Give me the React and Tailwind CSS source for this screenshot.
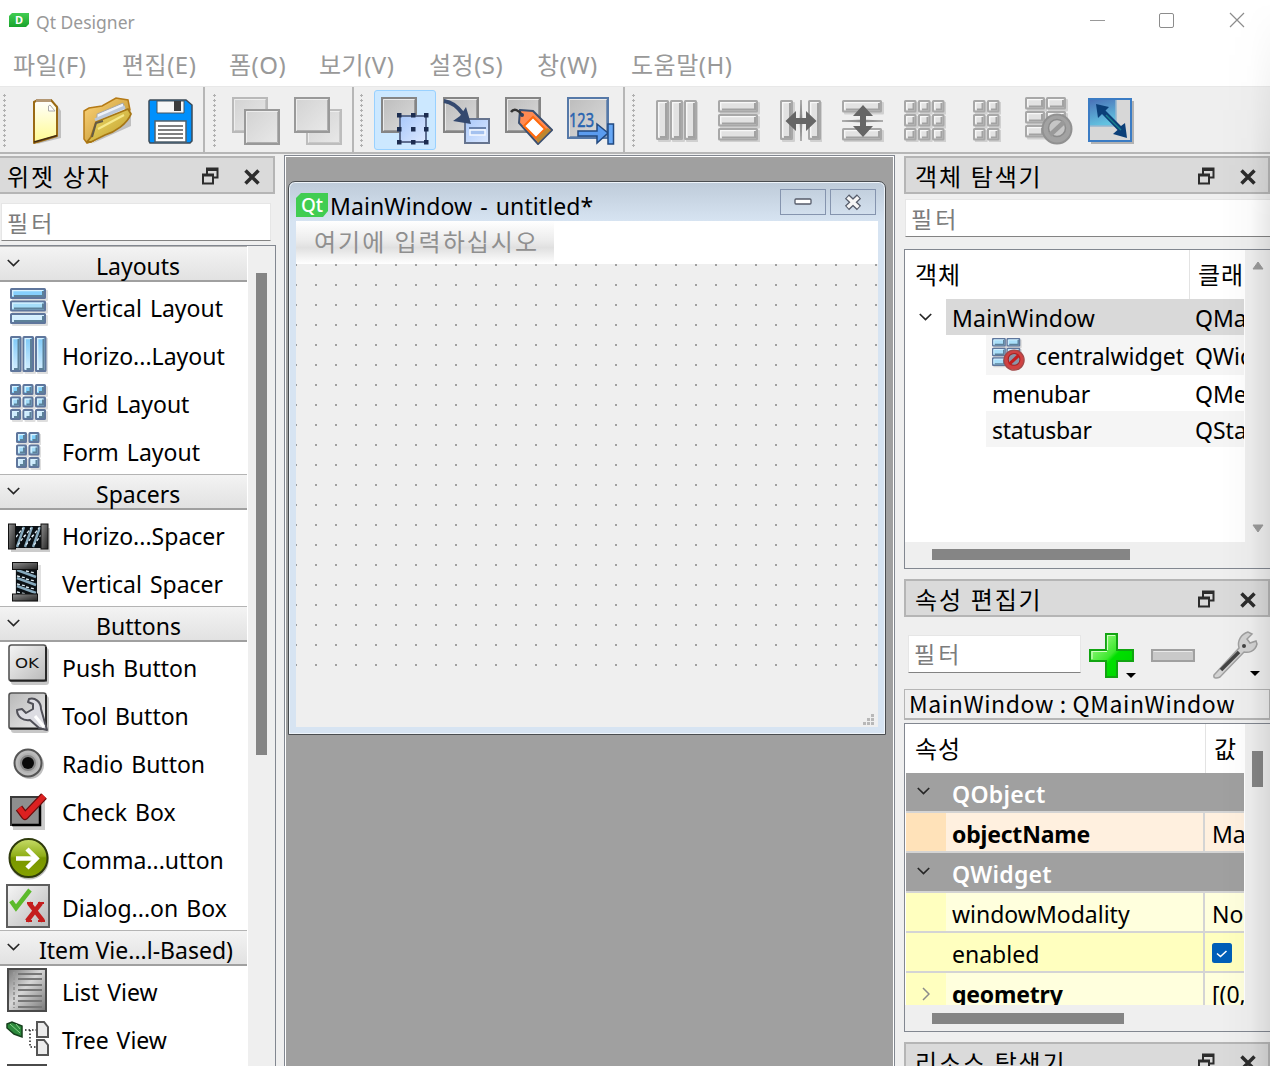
import React from "react";

const FONT = "font-['Noto_Sans','Noto_Sans_CJK_KR',sans-serif]";

/* ---------- shared icon definitions ---------- */

function Defs() {
  return (
    <svg className="absolute h-0 w-0" aria-hidden="true">
      <defs>
        <linearGradient id="gray" x1="0" y1="0" x2="1" y2="1">
          <stop offset="0" stopColor="#d2d2d2" />
          <stop offset="1" stopColor="#e9e9e9" />
        </linearGradient>
        <linearGradient id="mid" x1="0" y1="0" x2="1" y2="1">
          <stop offset="0" stopColor="#bcbcbc" />
          <stop offset="1" stopColor="#dcdcdc" />
        </linearGradient>
        <linearGradient id="blueV" x1="0" y1="0" x2="0" y2="1">
          <stop offset="0" stopColor="#7cc8f8" />
          <stop offset="1" stopColor="#d6efff" />
        </linearGradient>
        <linearGradient id="sky" x1="0" y1="0" x2="1" y2="1">
          <stop offset="0" stopColor="#a9c8fa" />
          <stop offset="1" stopColor="#dbe8ff" />
        </linearGradient>
        <linearGradient id="page" x1="0" y1="0" x2="0" y2="1">
          <stop offset="0" stopColor="#ffffff" />
          <stop offset="1" stopColor="#fffa90" />
        </linearGradient>
        <linearGradient id="folder" x1="0" y1="0" x2="1" y2="1">
          <stop offset="0" stopColor="#ffd57c" />
          <stop offset="1" stopColor="#b58a22" />
        </linearGradient>
        <linearGradient id="flap" x1="0" y1="0" x2="1" y2="1">
          <stop offset="0" stopColor="#f0e06e" />
          <stop offset="1" stopColor="#c09a28" />
        </linearGradient>
        <linearGradient id="green" x1="0" y1="0" x2="1" y2="1">
          <stop offset="0" stopColor="#b8ff9c" />
          <stop offset="0.48" stopColor="#3de82e" />
          <stop offset="0.55" stopColor="#00e000" />
          <stop offset="1" stopColor="#00d000" />
        </linearGradient>
        <linearGradient id="btn" x1="0" y1="0" x2="1" y2="1">
          <stop offset="0" stopColor="#f6f6f6" />
          <stop offset="1" stopColor="#b9b9b9" />
        </linearGradient>
        <linearGradient id="toolbtn" x1="0" y1="0" x2="1" y2="1">
          <stop offset="0" stopColor="#b8b8b8" />
          <stop offset="1" stopColor="#ececec" />
        </linearGradient>
        <linearGradient id="metal" x1="0" y1="0" x2="1" y2="1">
          <stop offset="0" stopColor="#8e8e8e" />
          <stop offset="1" stopColor="#242424" />
        </linearGradient>
        <linearGradient id="list" x1="0" y1="0" x2="1" y2="1">
          <stop offset="0" stopColor="#777777" />
          <stop offset="0.45" stopColor="#d6d6d6" />
          <stop offset="1" stopColor="#777777" />
        </linearGradient>
        <linearGradient id="olive" x1="0" y1="0" x2="0" y2="1">
          <stop offset="0" stopColor="#c7dc68" />
          <stop offset="0.45" stopColor="#8fae18" />
          <stop offset="0.5" stopColor="#789600" />
          <stop offset="1" stopColor="#86a200" />
        </linearGradient>
        <linearGradient id="bluePanel" x1="0" y1="0" x2="0.3" y2="1">
          <stop offset="0" stopColor="#4a72b8" />
          <stop offset="1" stopColor="#62c2e0" />
        </linearGradient>
      </defs>
    </svg>
  );
}

function Svg({ w, h, children, className = "" }) {
  return (
    <svg width={w} height={h} viewBox={`0 0 ${w} ${h}`} className={"shrink-0 " + className} fill="none">
      {children}
    </svg>
  );
}

/* A bevelled cell used by all layout icons. */
function Cell({ x, y, w, h, blue, fill }) {
  const edge = blue ? "#5f769c" : "#a8a8a8";
  const inner = fill || (blue ? "url(#blueV)" : "#e2e2e2");
  return (
    <g>
      <rect x={x + 2} y={y + 2} width={w} height={h} rx="1" fill="#000" opacity="0.13" />
      <rect x={x + 1} y={y + 1} width={w - 2} height={h - 2} rx="0.5" fill={inner} stroke={edge} strokeWidth="2" />
      <path d={`M${x + 2.700} ${y + h - 3}V${y + 2.700}H${x + w - 3}`} stroke={blue ? "#d8f2ff" : "#f8f8f8"} strokeWidth="1.300" />
      <path d={`M${x + w - 3} ${y + 3}V${y + h - 3}H${x + 4}`} stroke={blue ? "#5d8199" : "#a2a2a2"} strokeWidth="2" />
    </g>
  );
}

function Rows({ size = 42, blue }) {
  const g = size === 42 ? 14 : 12.5;
  const f = blue ? ["#86d0fd", "#a6def9", "#d3eeff"] : [];
  return (
    <Svg w={size} h={size}>
      {[0, 1, 2].map((i) => <Cell key={i} x={0} y={i * g} w={size - 2} h={g - 1.500} blue={blue} fill={f[i]} />)}
    </Svg>
  );
}

function Cols({ size = 42, blue }) {
  const g = size === 42 ? 14 : 12.5;
  return (
    <Svg w={size} h={size}>
      {[0, 1, 2].map((i) => <Cell key={i} x={i * g} y={0} w={g - 1} h={size - 2} blue={blue} />)}
    </Svg>
  );
}

function GridIcon({ cols, size = 42, blue }) {
  const g = size === 42 ? 14 : 12.5;
  const list = [];
  for (let r = 0; r < 3; r++) for (let c = 0; c < cols; c++) list.push([r, c]);
  const f = ["#7fd0fb", "#a3dbf8", "#cdeafc"];
  return (
    <Svg w={cols * g} h={size}>
      {list.map(([r, c]) => (
        <Cell key={r + "-" + c} x={c * g} y={r * g} w={g - 1.500} h={g - 1.500} blue={blue} fill={blue ? f[r] : undefined} />
      ))}
    </Svg>
  );
}

function SplitH() {
  return (
    <Svg w={42} h={42}>
      <Cell x={0} y={0} w={13} h={40} />
      <Cell x={28} y={0} w={13} h={40} />
      <path d="M21 0L22 20L21 41L20 20Z" stroke="#8a8a8a" strokeWidth="0.800" fill="#777" />
      <path d="M5.500 21L16 11V18H26V11L36.500 21L26 31V24H16V31Z" fill="#666" />
    </Svg>
  );
}

function SplitV() {
  return (
    <Svg w={42} h={42}>
      <Cell x={0} y={0} w={40} h={12.500} />
      <Cell x={0} y={28} w={40} h={12.500} />
      <path d="M0 21L20 20L41 21L20 22Z" stroke="#8a8a8a" strokeWidth="0.800" fill="#777" />
      <path d="M21 5L31 16H24V26H31L21 37L11 26H18V16H11Z" fill="#666" />
    </Svg>
  );
}

function BreakIcon({ blue, scale = 1 }) {
  const cells = [[0, 0], [21, 0], [0, 14], [21, 14], [0, 28]];
  return (
    <svg width={48 * scale} height={48 * scale} viewBox="0 0 48 48" fill="none" className="shrink-0">
      {cells.map(([x, y]) => (
        <Cell key={x + "," + y} x={x} y={y} w={20} h={12.500} blue={blue} fill={blue ? "#a9dffa" : undefined} />
      ))}
      <circle cx="32" cy="32" r="14.500" fill={blue ? "#d04242" : "#a2a2a2"} stroke={blue ? "#a34848" : "#919191"} strokeWidth="2" />
      <circle cx="32" cy="31" r="8.500" fill={blue ? "#8a96aa" : "#c6c6c6"} stroke={blue ? "#a52222" : "#8b8b8b"} strokeWidth="1.500" />
      <path d="M25 38L39 25" stroke={blue ? "#c41d1d" : "#999"} strokeWidth="4.500" />
    </svg>
  );
}

function Sq({ x, y, s, fill = "url(#mid)", stroke = "#858585" }) {
  return (
    <g>
      <rect x={x + 1} y={y + 1} width={s - 2} height={s - 2} fill={fill} stroke={stroke} strokeWidth="2" />
      <path d={`M${x + 2.500} ${y + s - 3}V${y + 2.500}H${x + s - 3}`} stroke="#f2f2f2" opacity="0.8" />
      <path d={`M${x + s - 2.500} ${y + 3}V${y + s - 2.500}H${x + 3}`} stroke={stroke} opacity="0.7" />
    </g>
  );
}

const NewIcon = () => (
  <Svg w={30} h={48}>
    <path d="M6 47L30 41V14L26 8Z" fill="#000" opacity="0.2" />
    <path d="M3 5L7 3H20L26 10V39L3 46Z" fill="url(#page)" stroke="#9a6a14" strokeWidth="2" strokeLinejoin="round" />
    <path d="M5 3.500H20" stroke="#b39773" strokeWidth="3" />
    <path d="M17.500 9V14H24L19 8Z" fill="#fff" stroke="#aaa" />
    <path d="M3 45L26 38.500" stroke="#432b10" strokeWidth="1.500" />
  </Svg>
);

const OpenIcon = () => (
  <Svg w={50} h={50}>
    <path d="M8 48L48 30V20L30 34Z" fill="#000" opacity="0.2" />
    <path d="M1 15L6 12L19 10L33 2L45 4L47 14L10 45L4 47L1 43Z" fill="url(#folder)" stroke="#b57a16" strokeWidth="1.500" />
    <path d="M14 18L40 7L43 16L14 37Z" fill="#eef2f8" stroke="#a7a7a7" />
    <path d="M12 24L42 11" stroke="#bcc8d8" strokeWidth="3" />
    <path d="M8 46L4 46L8 41L13 26L45 13L48 18C44 28 32 36 22 39Z" fill="url(#flap)" stroke="#a67615" strokeWidth="1.800" strokeLinejoin="round" />
    <path d="M9 41L13 27L20 25" stroke="#655b45" strokeWidth="2" />
    <path d="M15 33L41 19" stroke="#f6e98c" strokeWidth="2" />
  </Svg>
);

const SaveIcon = () => (
  <Svg w={45} h={45} className="mt-[2px]">
    <path d="M2 1H38L44 6V42L42 44H2L1 42V2Z" fill="#0090fc" stroke="#3c4b58" strokeWidth="1.500" />
    <path d="M9 2H36V14H9Z" fill="#f7f7f7" stroke="#46555f" />
    <path d="M26 2H33V12H26Z" fill="#3c3c3c" />
    <path d="M7 22H38V43H7Z" fill="#fff" stroke="#52606b" strokeWidth="1.500" />
    <path d="M10 27H35M10 31H35M10 35H35M10 39H35" stroke="#555" strokeWidth="1.700" />
  </Svg>
);

const BackIcon = () => (
  <Svg w={48} h={48}>
    <Sq x={0} y={0} s={36} stroke="#b9b9b9" fill="url(#gray)" />
    <Sq x={12} y={12} s={36} stroke="#999" fill="url(#gray)" />
  </Svg>
);
const FrontIcon = () => (
  <Svg w={48} h={48}>
    <Sq x={12} y={12} s={36} stroke="#bdbdbd" fill="url(#gray)" />
    <Sq x={0} y={0} s={36} stroke="#999" fill="url(#gray)" />
  </Svg>
);

const WidgetEdit = () => (
  <Svg w={48} h={50} className="mt-px">
    <Sq x={0} y={1} s={36} />
    <rect x="19" y="20" width="26" height="26" fill="url(#sky)" stroke="#5d6e90" strokeWidth="2" />
    {[16, 30, 43].map((x) => [17, 31, 44].map((y) => <rect key={x + "-" + y} x={x} y={y} width="4.500" height="4.500" fill="#1c2d50" />))}
  </Svg>
);

const SignalEdit = () => (
  <Svg w={48} h={48}>
    <Sq x={0} y={0} s={36} />
    <rect x="22" y="22" width="24" height="24" fill="url(#sky)" stroke="#66748f" strokeWidth="2" />
    <path d="M27 33H42V38H27Z" fill="#a4c1ef" stroke="#f5f9ff" strokeWidth="1.500" />
    <path d="M26 31H43" stroke="#6a83ad" strokeWidth="2" />
    <path d="M1 4C9 5 15 10 20 17" stroke="#34496f" strokeWidth="4" />
    <path d="M23 10L28 27L10 24L17 19Z" fill="#34496f" />
  </Svg>
);

const BuddyEdit = () => (
  <Svg w={48} h={48}>
    <Sq x={0} y={0} s={36} />
    <path d="M15 13L28 14L47 33L33 47L14 26Z" fill="#ff8a52" stroke="#3c5070" strokeWidth="2" />
    <path d="M28 20L40 32L31 41L19 29Z" fill="#fff" stroke="#ff6a0c" strokeWidth="2" />
    <path d="M33 46L46 33L42 31L31 42Z" fill="#bd872f" />
    <path d="M6 15C9 11 14 13 17 18" stroke="#333" strokeWidth="2.500" />
    <circle cx="17" cy="18" r="2" fill="#30405c" />
  </Svg>
);

const TabEdit = () => (
  <Svg w={48} h={48}>
    <Sq x={0} y={0} s={42} stroke="#5679a8" />
    <text x="2" y="30" fontSize="20" textLength="25" lengthAdjust="spacingAndGlyphs" fontFamily="Noto Sans" fill="#2763b0" stroke="#2763b0" strokeWidth="0.500">123</text>
    <path d="M11 34H30V27L41 36L30 46V39H11Z" fill="#5b9cef" stroke="#234a80" strokeWidth="1.500" />
    <rect x="41" y="27" width="5.500" height="20" fill="#67a8f6" stroke="#234a80" strokeWidth="1.500" />
  </Svg>
);

const AdjustIcon = () => (
  <Svg w={46} h={46}>
    <rect x="3" y="3" width="43" height="43" fill="#000" opacity="0.25" />
    <rect x="1" y="1" width="42" height="42" fill="#d7d7d7" stroke="#3b7cc4" strokeWidth="2" />
    <rect x="2" y="2" width="26" height="26" fill="url(#bluePanel)" />
    <path d="M28 2V28H2" stroke="#94b7cf" strokeWidth="1.500" />
    <path d="M8 6L21 9L17.500 12.500L33 28L37 25L39 40L25 36L29.500 32L14 16L10 20Z" fill="#0b3f78" />
    <path d="M18 17L33 32" stroke="#17808c" strokeWidth="1.500" />
  </Svg>
);

/* ---------- widget box icons ---------- */

const SpacerH = () => (
  <Svg w={44} h={32} className="ml-[4px] mt-[9px]">
    <rect x="3" y="5" width="39" height="24" fill="#000" opacity="0.2" />
    <rect x="8" y="3" width="25" height="22" fill="#0b1014" />
    {[0, 8, 16].map((i) => (
      <g key={i}>
        <path d={`M${9 + i} 24L${16 + i} 4`} stroke="#86a9bd" strokeWidth="2.400" />
        <path d={`M${8 + i} 14L${15 + i} 5M${10 + i} 22L${17 + i} 12`} stroke="#dceaf2" strokeWidth="1.300" strokeDasharray="3 2" />
      </g>
    ))}
    <rect x="0.500" y="1" width="7" height="25" fill="url(#metal)" stroke="#111" />
    <rect x="33" y="1" width="7" height="25" fill="url(#metal)" stroke="#111" />
  </Svg>
);

const SpacerV = () => (
  <Svg w={32} h={42} className="mt-[2px]">
    <rect x="3" y="3" width="26" height="37" fill="#000" opacity="0.12" />
    <rect x="4" y="7" width="21" height="26" fill="#0b1014" />
    {[0, 8, 16].map((i) => (
      <g key={i}>
        <path d={`M5 ${8 + i}L24 ${15 + i}`} stroke="#86a9bd" strokeWidth="2.400" />
        <path d={`M5 ${14 + i}L14 ${16 + i}M14 ${9 + i}L23 ${11 + i}`} stroke="#dceaf2" strokeWidth="1.300" strokeDasharray="3 2" />
      </g>
    ))}
    <rect x="0.500" y="0.500" width="25" height="7" fill="url(#metal)" stroke="#111" />
    <rect x="0.500" y="32" width="25" height="7" fill="url(#metal)" stroke="#111" />
  </Svg>
);

const Plate = ({ fill = "url(#btn)" }) => (
  <g>
    <rect x="3" y="4" width="38" height="37" rx="3" fill="#000" opacity="0.22" />
    <rect x="1" y="1" width="37" height="36" rx="2.500" fill={fill} stroke="#555" strokeWidth="1.600" />
    <path d="M2 36.500H38V3" stroke="#222" strokeWidth="1.800" />
  </g>
);

const PushIcon = () => (
  <Svg w={42} h={42} className="-mt-[2px] ml-[2px]">
    <Plate />
    <text x="7" y="23.500" fontSize="14" textLength="24" lengthAdjust="spacingAndGlyphs" fontFamily="DejaVu Sans" fill="#111">OK</text>
  </Svg>
);

const ToolIcon = () => (
  <Svg w={42} h={42} className="-mt-[2px] ml-[2px]">
    <Plate fill="url(#toolbtn)" />
    <path d="M21 7C27 5 33 10 33 17L39 38L31 36L22 28C15 29 9 25 9 18L14 17L18 21L25 17V12L20 10Z" fill="#dcdce2" stroke="#505058" strokeWidth="2" strokeLinejoin="round" />
    <path d="M27 24L36 35" stroke="#fff" strokeWidth="3" />
  </Svg>
);

const RadioIcon = () => (
  <Svg w={32} h={34} className="ml-[2px] mt-[5px]">
    <circle cx="17" cy="17" r="14" fill="#000" opacity="0.25" />
    <circle cx="15" cy="15" r="13.500" fill="#bcbcbc" stroke="#555" strokeWidth="2" />
    <circle cx="15" cy="15" r="9" fill="#858585" stroke="#b0b0b0" strokeWidth="2" />
    <circle cx="15" cy="15" r="6" fill="#0a0a0a" />
  </Svg>
);

const CheckIcon = () => (
  <Svg w={40} h={40} className="ml-[3px] mt-[3px]">
    <rect x="3" y="8" width="32" height="30" fill="#000" opacity="0.2" />
    <rect x="1" y="5" width="29" height="28" fill="#8e8e8e" stroke="#3a3a3a" strokeWidth="2" />
    <path d="M30 7V33H2" stroke="#000" strokeWidth="2.500" />
    <path d="M9 16L15 24L34 4" stroke="#6b0d0d" strokeWidth="8" strokeLinejoin="round" />
    <path d="M9 16L15 24L34 4" stroke="#dc2020" strokeWidth="5.500" strokeLinejoin="round" />
  </Svg>
);

const CommandIcon = () => (
  <Svg w={42} h={42} className="ml-px mt-px">
    <circle cx="21" cy="21.500" r="20" fill="#000" opacity="0.25" />
    <circle cx="20.500" cy="20" r="19" fill="url(#olive)" stroke="#2f3b0c" strokeWidth="2" />
    <path d="M8 20.500H28" stroke="#fff" strokeWidth="4.500" />
    <path d="M19 11L28.500 20.500L19 30" stroke="#fff" strokeWidth="4.500" />
  </Svg>
);

const DialogIcon = () => (
  <Svg w={44} h={44}>
    <rect x="1" y="1" width="42" height="42" fill="url(#btn)" stroke="#5e5e5e" strokeWidth="2" />
    <path d="M5 17L10 24L24 6" stroke="#5cba2c" strokeWidth="4.500" />
    <path d="M23 19L37 37M35 19L21 37" stroke="#c41e1e" strokeWidth="4.500" />
    <path d="M20 37H26M32 37H39M21 19H27M32 19H38" stroke="#c41e1e" strokeWidth="2" />
  </Svg>
);

const ListIcon = () => (
  <Svg w={42} h={44} className="-ml-px">
    <rect x="1" y="1" width="38" height="42" fill="url(#list)" stroke="#4a4a4a" strokeWidth="2" />
    <path d="M11 6H35M11 11H35M11 17H35M11 22H35M11 28H35M11 33H35M11 39H35" stroke="#777" strokeWidth="2" />
    <path d="M7 4V40" stroke="#999" strokeWidth="2" strokeDasharray="3 2" />
  </Svg>
);

const TreeIcon = () => (
  <Svg w={46} h={38} className="ml-[2px] mt-[3px]">
    <path d="M1 3L6 1L16 5V16L8 13L1 7Z" fill="#2c8a3c" stroke="#16401d" strokeWidth="1.500" />
    <path d="M4 3L14 12M10 3L14 8" stroke="#8ad48c" />
    <path d="M19 9H30M24 9V26H30" stroke="#222" strokeWidth="1.500" strokeDasharray="1.500 2" />
    {[1, 19].map((y) => (
      <path key={y} d={`M31 ${y}H38L42 ${y + 5}V${y + 15}H31Z`} fill="#ececec" stroke="#555" strokeWidth="2" />
    ))}
  </Svg>
);

/* ---------- small controls ---------- */

function Chevron({ className = "", color = "#262626" }) {
  return (
    <svg width="13" height="8" viewBox="0 0 13 8" className={"shrink-0 " + className} fill="none">
      <path d="M0.800 1L6.500 6.500L12.200 1" stroke={color} strokeWidth="1.700" />
    </svg>
  );
}

function DockTitle({ children, className = "" }) {
  return (
    <div className={"flex h-[38px] shrink-0 items-center border-2 border-[#b5b5b5] bg-[#dadada] " + className}>
      <span className="grow whitespace-pre pt-[4px] text-[24px] leading-[30px] tracking-[1.800px] text-black">{children}</span>
      <Svg w={17} h={18} className="mr-[25px] mt-[2px]">
        <path d="M5 7V1.500H15.500V10.500H12" stroke="#2c2c2c" strokeWidth="2" />
        <path d="M5 2.500H16" stroke="#2c2c2c" strokeWidth="3" />
        <rect x="1" y="8" width="10" height="8.500" stroke="#2c2c2c" strokeWidth="2" />
        <path d="M0 8H12" stroke="#2c2c2c" strokeWidth="3" />
      </Svg>
      <Svg w={16} h={16} className="mt-[4px]">
        <path d="M1.500 1.500L14.500 14.500M14.500 1.500L1.500 14.500" stroke="#2c2c2c" strokeWidth="3.500" />
      </Svg>
    </div>
  );
}

function Filter({ className = "" }) {
  return (
    <div className={"flex h-[38px] shrink-0 items-center border border-[#e6e6e6] border-b-[#838383] bg-white pl-[5px] pt-[2px] text-[23px] tracking-[3px] text-[#7c7c7c] " + className}>
      필터
    </div>
  );
}

function Grip() {
  return <div className="h-[54px] w-[6px] shrink-0 bg-[radial-gradient(circle,#b0b0b0_1px,transparent_1.400px)] bg-[size:5px_5px]" />;
}

function ToolGroup({ children, className = "" }) {
  return (
    <div className={"flex items-center border-[#b6b6b6] " + className}>
      <Grip />
      {children}
    </div>
  );
}

function Tool({ children, active }) {
  return (
    <div className={"flex h-[60px] w-[62px] shrink-0 items-center justify-center pt-[2px] " + (active ? "rounded-[3px] border border-[#99d1ff] bg-[#cce8ff]" : "")}>
      {children}
    </div>
  );
}

/* ---------- widget box ---------- */

const SECTIONS = [
  {
    title: "Layouts", pad: "pl-[96px]",
    items: [
      ["Vertical Layout", <span className="ml-px pl-px pt-[2px]"><Rows size={38} blue /></span>],
      ["Horizo...Layout", <span className="ml-px pl-px pt-[2px]"><Cols size={38} blue /></span>],
      ["Grid Layout", <span className="ml-px pl-px pt-[2px]"><GridIcon cols={3} size={38} blue /></span>],
      ["Form Layout", <span className="pt-[2px]"><GridIcon cols={2} size={38} blue /></span>],
    ],
  },
  {
    title: "Spacers", pad: "pl-[96px]",
    items: [["Horizo...Spacer", <SpacerH />], ["Vertical Spacer", <SpacerV />]],
  },
  {
    title: "Buttons", pad: "pl-[96px]",
    items: [
      ["Push Button", <PushIcon />],
      ["Tool Button", <ToolIcon />],
      ["Radio Button", <RadioIcon />],
      ["Check Box", <CheckIcon />],
      ["Comma...utton", <CommandIcon />],
      ["Dialog...on Box", <DialogIcon />],
    ],
  },
  {
    title: "Item Vie...l-Based)", pad: "pl-[39px]",
    items: [
      ["List View", <ListIcon />],
      ["Tree View", <TreeIcon />],
      ["", <ListIcon />],
    ],
  },
];

function WidgetBox() {
  return (
    <aside className="flex w-[276px] shrink-0 flex-col pt-[2px]">
      <DockTitle className="mr-px border-l-0 pl-[7px] pr-[13px]">위젯 상자</DockTitle>
      <Filter className="ml-px mr-[5px] mt-[9px]" />
      <div className="mt-[4px] flex min-h-0 grow border-r border-t border-[#828790] bg-white">
        <div className="flex w-[248px] shrink-0 flex-col overflow-hidden">
          {SECTIONS.map((s) => (
            <div key={s.title} className="shrink-0">
              <div className={"relative flex h-[36px] w-[247px] items-center border-b-2 border-t border-b-[#a0a0a0] border-t-[#b4b4b4] bg-gradient-to-b from-[#f3f3f3] to-[#e2e2e2] " + s.pad}>
                <Chevron className="absolute left-[7px] top-[12px]" />
                <span className="whitespace-nowrap pt-[5px] text-[23px] leading-[30px]">{s.title}</span>
              </div>
              {s.items.map(([name, icon], i) => (
                <div key={i} className="flex h-[48px] items-center">
                  <div className="flex w-[56px] shrink-0 items-center justify-center">{icon}</div>
                  <span className="whitespace-nowrap pl-[6px] pt-[4px] text-[23px] leading-[30px] [word-spacing:2px]">{name}</span>
                </div>
              ))}
            </div>
          ))}
        </div>
        <div className="flex w-[27px] justify-center bg-[#efefef]">
          <div className="mt-[27px] h-[482px] w-[11px] bg-[#858585]" />
        </div>
      </div>
    </aside>
  );
}

/* ---------- form editor ---------- */

function FormWindow() {
  return (
    <div className="ml-[2px] mt-[24px] flex h-[554px] w-[598px] flex-col rounded-t-[7px] border border-[#4a4d50] bg-[#d7e4f2] bg-[linear-gradient(#becbd9,#d7e4f2_40px)] bg-no-repeat px-[7px] pb-[7px] shadow-[inset_0_0_0_1px_#eef4fa]">
      <div className="flex h-[39px] shrink-0 items-center">
        <div className="mt-[7px] flex h-[24px] w-[32px] items-center justify-center bg-[#41cd52] [clip-path:polygon(5px_0,100%_0,100%_18px,27px_100%,0_100%,0_5px)]">
          <span className="text-[19px] font-medium leading-[22px] text-white">Qt</span>
        </div>
        <span className="grow whitespace-nowrap pl-[2px] pt-[9px] text-[23px] leading-[28px] tracking-[0.100px] [word-spacing:2px]">MainWindow - untitled*</span>
        <div className="mr-[4px] mt-px flex h-[26px] w-[46px] items-center justify-center border border-[#8594ae]">
          <Svg w={18} h={8}><rect x="1" y="1" width="16" height="5" rx="1" fill="#fff" stroke="#555b69" strokeWidth="1.300" /></Svg>
        </div>
        <div className="mr-[2px] mt-px flex h-[26px] w-[46px] items-center justify-center border border-[#8594ae]">
          <Svg w={19} h={17}>
            <path d="M3 2.500L15 14M15 2.500L3 14" stroke="#555b69" strokeWidth="6" />
            <path d="M3.700 3.200L14.300 13.300M14.300 3.200L3.700 13.300" stroke="#f6f6f6" strokeWidth="3.500" />
          </Svg>
        </div>
      </div>
      <div className="flex min-h-0 grow flex-col bg-[#efefef]">
        <div className="h-[43px] shrink-0 bg-white">
          <div className="flex h-[43px] w-[258px] items-center bg-[linear-gradient(#fff,#ececec_45%,#e0e0e0_62%,#fff)] pb-[2px] pl-[18px]">
            <span className="whitespace-nowrap text-[24px] tracking-[2px] text-[#8f8f8f]">여기에 입력하십시오</span>
          </div>
        </div>
        <svg width="582" height="404" className="block shrink-0">
          <defs>
            <pattern id="dots" x="-1" y="0" width="20" height="20" patternUnits="userSpaceOnUse">
              <rect width="2" height="2" fill="#a0a0a0" />
            </pattern>
          </defs>
          <rect width="582" height="404" fill="url(#dots)" />
        </svg>
        <div className="flex grow items-end justify-end pb-[2px] pr-[4px]">
          <Svg w={11} h={11}>
            {[[8, 0], [4, 4], [8, 4], [0, 8], [4, 8], [8, 8]].map(([x, y]) => (
              <rect key={x + "," + y} x={x} y={y} width="3" height="3" fill="#b8b8b8" />
            ))}
          </Svg>
        </div>
      </div>
    </div>
  );
}

/* ---------- object inspector ---------- */

function ObjRow({ name, cls, indent, h, bg, icon, open, track = "" }) {
  return (
    <div className={"flex shrink-0 items-center " + h}>
      <div className={"flex shrink-0 items-center self-stretch pl-[13px] " + indent}>{open && <Chevron />}</div>
      <div className={"flex grow items-center self-stretch overflow-hidden pl-[6px] " + bg}>
        {icon}
        <span className={"grow whitespace-nowrap pt-px text-[23px] leading-[30px] " + track}>{name}</span>
        <span className="w-[49px] shrink-0 overflow-hidden whitespace-nowrap pt-px text-[23px] leading-[30px]">{cls}</span>
      </div>
    </div>
  );
}

function ObjectInspector() {
  return (
    <section className="flex shrink-0 flex-col">
      <DockTitle className="pl-[9px] pr-[12px]">객체 탐색기</DockTitle>
      <Filter className="ml-px mt-[5px] w-[380px]" />
      <div className="mt-[12px] flex h-[320px] flex-col border-y border-l border-[#828790] bg-white">
        <div className="flex min-h-0 grow">
          <div className="flex w-[340px] shrink-0 flex-col pl-px pr-px">
            <div className="flex h-[49px] shrink-0 text-[24px] leading-[49px] tracking-[1px]">
              <div className="w-[284px] shrink-0 border-r border-[#e3e3e3] pl-[9px]">객체</div>
              <div className="w-[54px] overflow-hidden whitespace-nowrap pl-[8px]">클래스</div>
            </div>
            <ObjRow name="MainWindow" cls="QMainWindow" indent="w-[40px]" h="h-[36px]" bg="bg-[#d9d9d9]" open track="tracking-[0.200px]" />
            <ObjRow name="centralwidget" cls="QWidget" indent="w-[80px]" h="h-[40px]" bg="bg-[#f5f5f5]" icon={<span className="mr-[11px]"><BreakIcon blue scale={0.690} /></span>} />
            <ObjRow name="menubar" cls="QMenuBar" indent="w-[80px]" h="h-[36px]" bg="" track="tracking-[-0.200px]" />
            <ObjRow name="statusbar" cls="QStatusBar" indent="w-[80px]" h="h-[36px]" bg="bg-[#f5f5f5]" track="tracking-[-0.300px]" />
          </div>
          <div className="flex w-[25px] flex-col items-center justify-between bg-[#efefef] pb-[9px] pt-[11px]">
            <Svg w={12} h={9}><path d="M6 1L11 8H1Z" fill="#9b9b9b" stroke="#9b9b9b" strokeLinejoin="round" /></Svg>
            <Svg w={12} h={9}><path d="M6 8L11 1H1Z" fill="#9b9b9b" stroke="#9b9b9b" strokeLinejoin="round" /></Svg>
          </div>
        </div>
        <div className="flex h-[26px] shrink-0 items-center bg-[#efefef] pb-[2px] pl-[27px]">
          <div className="h-[11px] w-[198px] bg-[#858585]" />
        </div>
      </div>
    </section>
  );
}

/* ---------- property editor ---------- */

function GroupRow({ name }) {
  return (
    <div className="flex h-[40px] shrink-0 items-center border-b-2 border-[#d4d4d4] bg-[#a0a0a0] pl-[11px]">
      <Chevron className="mb-[2px]" />
      <span className="pl-[22px] pt-[4px] text-[23px] font-semibold leading-[30px] tracking-[0.300px] text-white">{name}</span>
    </div>
  );
}

function PropRow({ name, value, bold, gutter, bg, arrow }) {
  return (
    <div className="flex h-[40px] shrink-0">
      <div className={"flex w-[40px] shrink-0 items-center justify-center border-b-2 border-[#d4d4d4] " + gutter}>
        {arrow && <Svg w={8} h={14} className="mt-[3px]"><path d="M1 1L7 7L1 13" stroke="#8b8b8b" strokeWidth="1.500" /></Svg>}
      </div>
      <div className={"flex w-[259px] shrink-0 items-center border-b-2 border-r-2 border-[#d4d4d4] pl-[6px] pt-[4px] text-[23px] leading-[30px] " + bg + (bold ? " font-bold tracking-[-0.200px]" : "")}>{name}</div>
      <div className={"flex w-[39px] shrink-0 items-center overflow-hidden whitespace-nowrap border-b-2 border-[#d4d4d4] pl-[7px] pt-[4px] text-[23px] leading-[30px] " + bg}>{value}</div>
    </div>
  );
}

function PropertyEditor() {
  return (
    <section className="mt-[10px] flex shrink-0 flex-col">
      <DockTitle className="pl-[9px] pr-[12px]">속성 편집기</DockTitle>
      <div className="flex h-[72px] shrink-0 items-center pl-[4px]">
        <Filter className="mt-px w-[173px]" />
        <div className="ml-[8px] mt-[5px] flex w-[62px] shrink-0 items-end">
          <Svg w={48} h={46}>
            <path d="M17 1H28V17H44V28H28V44H17V28H1V17H17Z" fill="url(#green)" stroke="#11a411" strokeWidth="2" />
            <path d="M18.500 17V2.500H26M3 26V18.500H18" stroke="#d0ffc0" strokeWidth="1.200" />
            <path d="M37 40H47L42 45Z" fill="#000" />
          </Svg>
        </div>
        <div className="mt-[4px] w-[61px] shrink-0">
          <Svg w={44} h={13}>
            <rect x="1" y="1" width="42" height="11" fill="#c9c9c9" stroke="#a0a0a0" strokeWidth="2" />
            <path d="M2.500 2.500H41" stroke="#e9e9e9" />
          </Svg>
        </div>
        <Svg w={50} h={50} className="mt-[5px]">
          <path d="M2 44L27 17C25 10 29 3 36 1L40 3L35 8L38 12L44 10L45 13C43 21 36 22 32 21L8 46C4 48 1 47 2 44Z" fill="#d3d3d3" stroke="#a0a0a0" strokeWidth="1.500" />
          <path d="M9 39L27 21" stroke="#444" strokeWidth="3.500" />
          <circle cx="32" cy="15" r="2" fill="#444" />
          <path d="M38 40H48L43 45Z" fill="#000" />
        </Svg>
      </div>
      <div className="flex h-[31px] shrink-0 items-center border border-b-2 border-[#b5b5b5] pl-[4px] font-['Noto_Sans_CJK_KR',sans-serif] text-[23px]">
        <span className="whitespace-pre pb-px tracking-[0.600px]">MainWindow : QMainWindow</span>
      </div>
      <div className="mt-[3px] flex h-[309px] flex-col border-y border-l border-[#828790] bg-white">
        <div className="flex min-h-0 grow">
          <div className="flex w-[340px] shrink-0 flex-col overflow-hidden pl-px pr-px">
            <div className="flex h-[49px] shrink-0 text-[24px] leading-[49px] tracking-[1px]">
              <div className="w-[300px] shrink-0 border-r border-[#e3e3e3] pl-[9px]">속성</div>
              <div className="pl-[8px]">값</div>
            </div>
            <GroupRow name="QObject" />
            <PropRow name="objectName" value="MainWindow" bold gutter="bg-[#ffe2b9]" bg="bg-[#fff0df]" />
            <GroupRow name="QWidget" />
            <PropRow name="windowModality" value="NonModal" gutter="bg-[#ffffbf]" bg="bg-[#ffffdd]" />
            <PropRow
              name="enabled" gutter="bg-[#ffffbf]" bg="bg-[#ffffbf]"
              value={
                <Svg w={20} h={20} className="-mt-[2px]">
                  <rect width="20" height="20" rx="2.500" fill="#005fb8" />
                  <path d="M5 10.500L8.500 13.500L14.500 8" stroke="#fff" strokeWidth="1.600" />
                </Svg>
              }
            />
            <PropRow name="geometry" value="[(0, 0), 800 x 600]" bold arrow gutter="bg-[#ffffbf]" bg="bg-[#ffffdd]" />
          </div>
          <div className="flex w-[25px] justify-center bg-[#efefef]">
            <div className="mt-[27px] h-[36px] w-[11px] bg-[#858585]" />
          </div>
        </div>
        <div className="flex h-[26px] shrink-0 items-center bg-[#efefef] pl-[27px]">
          <div className="h-[11px] w-[192px] bg-[#858585]" />
        </div>
      </div>
    </section>
  );
}

const MENUS = [
  ["파일(F)", "w-[109px]"],
  ["편집(E)", "w-[107px]"],
  ["폼(O)", "w-[90px]"],
  ["보기(V)", "w-[110px]"],
  ["설정(S)", "w-[108px]"],
  ["창(W)", "w-[94px]"],
  ["도움말(H)", "w-[120px]"],
];

export default function App() {
  return (
    <div className={"relative flex h-[1066px] w-[1270px] flex-col overflow-hidden bg-[#efefef] text-black " + FONT}>
      <Defs />
      <header className="h-[86px] shrink-0 bg-white text-[#999]">
        <div className="flex h-[43px] items-center pl-[9px] pr-[25px]">
          <div className="mb-[3px] flex h-[14px] w-[20px] items-center justify-center bg-gradient-to-b from-[#41cd52] to-[#17a32b] text-[11px] font-bold leading-[14px] text-white [clip-path:polygon(3px_0,100%_0,100%_11px,17px_100%,0_100%,0_3px)]">D</div>
          <span className="grow pl-[7px] text-[17.500px] leading-[24px]">Qt Designer</span>
          <div className="flex items-center pb-[3px]">
            <div className="h-px w-[15px] bg-[#999]" />
            <div className="ml-[54px] h-[15px] w-[15px] rounded-[2px] border border-[#8c8c8c]" />
            <Svg w={16} h={16} className="ml-[55px]"><path d="M1 1L15 15M15 1L1 15" stroke="#8c8c8c" strokeWidth="1.200" /></Svg>
          </div>
        </div>
        <nav className="flex h-[43px] items-center pl-[13px]">
          {MENUS.map(([m, w]) => (
            <span key={m} className={"shrink-0 whitespace-nowrap text-[24px] leading-[40px] tracking-[0.500px] " + w}>{m}</span>
          ))}
        </nav>
      </header>

      <div className="flex h-[68px] shrink-0 border-b-2 border-t border-b-[#b6b6b6] border-t-[#e8e8e8]">
        <ToolGroup className="w-[205px] border-r-2 pl-[2px] [&>*:nth-child(2)]:ml-[7px]">
          <Tool><NewIcon /></Tool>
          <Tool><OpenIcon /></Tool>
          <Tool><SaveIcon /></Tool>
        </ToolGroup>
        <ToolGroup className="w-[149px] border-r-2 pl-[7px] [&>*:nth-child(2)]:ml-[7px]">
          <Tool><BackIcon /></Tool>
          <Tool><FrontIcon /></Tool>
        </ToolGroup>
        <ToolGroup className="w-[271px] border-r-2 pl-[5px] [&>*:nth-child(2)]:ml-[9px]">
          <Tool active><WidgetEdit /></Tool>
          <Tool><SignalEdit /></Tool>
          <Tool><BuddyEdit /></Tool>
          <Tool><TabEdit /></Tool>
        </ToolGroup>
        <ToolGroup className="grow pl-[6px] [&>*:nth-child(2)]:ml-[9px]">
          <Tool><Cols /></Tool>
          <Tool><Rows /></Tool>
          <Tool><SplitH /></Tool>
          <Tool><SplitV /></Tool>
          <Tool><GridIcon cols={3} /></Tool>
          <Tool><GridIcon cols={2} /></Tool>
          <Tool><BreakIcon /></Tool>
          <Tool><AdjustIcon /></Tool>
        </ToolGroup>
      </div>

      <div className="flex min-h-0 grow">
        <WidgetBox />
        <main className="ml-[8px] mt-px w-[611px] shrink-0 border-x border-t border-[#828790] bg-white pl-px pr-px pt-px">
          <div className="h-full overflow-hidden bg-[#a0a0a0]">
            <FormWindow />
          </div>
        </main>
        <div className="ml-[9px] flex min-w-0 grow flex-col overflow-hidden pt-[2px]">
          <ObjectInspector />
          <PropertyEditor />
          <DockTitle className="mt-[10px] pl-[9px] pr-[12px]">리소스 탐색기</DockTitle>
        </div>
      </div>
      <div className="pointer-events-none absolute bottom-0 right-0 top-0 w-[50px] bg-[linear-gradient(to_right,transparent,rgba(0,0,0,0.02)_60%,rgba(0,0,0,0.09))] [mask-image:linear-gradient(transparent,#000_220px)]" />
    </div>
  );
}
